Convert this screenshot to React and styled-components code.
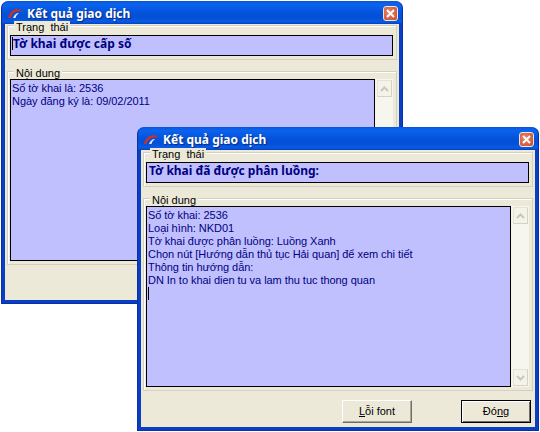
import React from 'react';
import styled, { createGlobalStyle } from 'styled-components';

const Global = createGlobalStyle`
    html, body {
        margin: 0;
        padding: 0;
        background: #fff;
    }
    #root {
        position: relative;
        width: 540px;
        height: 432px;
        overflow: hidden;
    }
`;

const AppLogo = () => (
    <svg width="17" height="13" viewBox="0 0 17 13">
        <path d="M1 11 C2 6 6 2 10 2 C12 2 14 3 15 5 C12 3.5 9 4 7 6 C5 7.5 4 9 3.5 11 Z" fill="#c8302a" />
        <path d="M6 11 C7 8 9 6 12 6 C10 7.5 9 9 8.5 11 Z" fill="#e8e8f4" />
    </svg>
);

const CloseIcon = () => (
    <svg width="9" height="9" viewBox="0 0 9 9">
        <path d="M1 1 L8 8 M8 1 L1 8" stroke="#fff" strokeWidth="2" />
    </svg>
);

const ArrowIcon = ({ down }) => (
    <svg width="9" height="6" viewBox="0 0 9 6">
        <path d={down ? 'M1 1 L4.5 4.5 L8 1' : 'M1 5 L4.5 1.5 L8 5'} fill="none" stroke="#c9c7ba" strokeWidth="2" />
    </svg>
);

const Dialog = ({ x, y, w, h, status, statusTop, bodyGap, lines, bodyHeight, footer }) => (
    <Window $x={x} $y={y} $w={w} $h={h}>
        <TitleBar>
            <AppLogo />
            <Title>Kết quả giao dịch</Title>
            <CloseButton><CloseIcon /></CloseButton>
        </TitleBar>
        <Client>
            <Group $top={statusTop}>
                <Legend>Trạng&nbsp; thái</Legend>
                <StatusField $focused={!footer}>
                    {!footer && <StatusCaret />}
                    {status}
                </StatusField>
            </Group>
            <BodyGroup $top={bodyGap}>
                <Legend>Nội dung</Legend>
                <BodyRow>
                    <BodyField $height={bodyHeight}>
                        {lines.map((line) => <Line key={line}>{line}</Line>)}
                        {footer && <Caret />}
                    </BodyField>
                    <ScrollBar>
                        <ScrollButton><ArrowIcon /></ScrollButton>
                        {footer && <ScrollButton><ArrowIcon down /></ScrollButton>}
                    </ScrollBar>
                </BodyRow>
            </BodyGroup>
            {footer && (
                <Footer>
                    <PushButton><u>L</u>ỗi font</PushButton>
                    <DefaultButton>Đó<u>n</u>g</DefaultButton>
                </Footer>
            )}
        </Client>
    </Window>
);

const App = () => (
    <>
        <Global />
        <Dialog
            x={1}
            y={1}
            w={402}
            h={303}
            statusTop={1}
            bodyGap={11}
            bodyHeight={182}
            status="Tờ khai được cấp số"
            lines={['Số tờ khai là: 2536', 'Ngày đăng ký là: 09/02/2011']}
        />
        <Dialog
            x={137}
            y={127}
            w={402}
            h={304}
            statusTop={2}
            bodyGap={11}
            bodyHeight={181}
            footer
            status="Tờ khai đã được phân luồng:"
            lines={[
                'Số tờ khai: 2536',
                'Loại hình: NKD01',
                'Tờ khai được phân luồng: Luồng Xanh',
                'Chọn nút [Hướng dẫn thủ tục Hải quan] để xem chi tiết',
                'Thông tin hướng dẫn:',
                'DN In to khai dien tu va lam thu tuc thong quan',
            ]}
        />
    </>
);

const Window = styled.div`
    position: absolute;
    left: ${(p) => p.$x}px;
    top: ${(p) => p.$y}px;
    width: ${(p) => p.$w}px;
    height: ${(p) => p.$h}px;
    box-sizing: border-box;
    display: flex;
    flex-direction: column;
    background: #0a3fc4;
    border-radius: 7px 7px 0 0;
    border: 1px solid #0831a8;
    border-top-color: #0a55d8;
    font-family: "Liberation Sans", Arial, sans-serif;
`;
const TitleBar = styled.div`
    height: 22px;
    flex: none;
    display: flex;
    align-items: center;
    gap: 3px;
    padding: 0 4px 0 5px;
    border-radius: 6px 6px 0 0;
    background: linear-gradient(180deg, #0a5ce0 0%, #0a63ee 12%, #0553dc 45%, #0450d6 70%, #0a5ae6 90%, #0441b8 100%);
`;
const Title = styled.span`
    flex: 1;
    color: #fff;
    font-family: "Noto Sans", Verdana, sans-serif;
    font-size: 12px;
    font-weight: bold;
    text-shadow: 1px 1px 1px #0a2a80;
`;
const CloseButton = styled.div`
    width: 13px;
    height: 13px;
    display: flex;
    align-items: center;
    justify-content: center;
    background: radial-gradient(circle at 40% 40%, #e8876a, #c8492a);
    border: 1px solid #f0e6e0;
    border-radius: 3px;
`;
const Client = styled.div`
    flex: 1;
    min-height: 0;
    margin: 0 3px 3px;
    display: flex;
    flex-direction: column;
    background: #ece9d8;
    padding: 0 2px;
`;
const Group = styled.div`
    position: relative;
    flex: none;
    margin-top: ${(p) => p.$top}px;
    padding: 9px 3px 3px 2px;
    border: 1px solid #d4d0bf;
    box-shadow: inset 1px 1px 0 #fff;
`;
const BodyGroup = styled(Group)`
    padding-top: 7px;
`;
const Legend = styled.span`
    position: absolute;
    top: -5px;
    left: 6px;
    padding: 0 2px;
    background: #ece9d8;
    color: #000;
    font-size: 11px;
    line-height: 12px;
`;
const StatusField = styled.div`
    height: 21px;
    box-sizing: border-box;
    border: 1px solid #000;
    background: #c0c0ff;
    padding: 0 2px 0 ${(p) => (p.$focused ? 1 : 2)}px;
    color: #000080;
    font-family: "Noto Sans", Verdana, sans-serif;
    font-size: 12px;
    font-weight: bold;
    line-height: 15px;
`;
const StatusCaret = styled.span`
    display: inline-block;
    width: 1px;
    height: 13px;
    vertical-align: -2px;
    background: #000;
`;
const BodyRow = styled.div`
    display: flex;
    align-items: stretch;
`;
const BodyField = styled.div`
    flex: 1;
    height: ${(p) => p.$height}px;
    box-sizing: border-box;
    border: 1px solid #000;
    background: #c0c0ff;
    padding: 2px 1px 1px 1px;
    color: #000080;
    font-size: 11px;
    letter-spacing: -0.05px;
`;
const Line = styled.div`
    line-height: 13px;
    white-space: nowrap;
`;
const Caret = styled.div`
    width: 1px;
    height: 13px;
    background: #000;
`;
const ScrollBar = styled.div`
    width: 18px;
    flex: none;
    box-sizing: border-box;
    padding: 1px 1px 1px 2px;
    display: flex;
    flex-direction: column;
    justify-content: space-between;
    background: #f6f5ee;
`;
const ScrollButton = styled.div`
    height: 15px;
    display: flex;
    align-items: center;
    justify-content: center;
    background: #f4f3ea;
    border: 1px solid #e6e3d6;
    border-right-color: #d6d3c4;
    border-bottom-color: #d6d3c4;
`;
const Footer = styled.div`
    flex: 1;
    display: flex;
    justify-content: flex-end;
    align-items: center;
    gap: 49px;
    padding-right: 2px;
    padding-top: 4px;
`;
const PushButton = styled.div`
    width: 70px;
    height: 23px;
    box-sizing: border-box;
    display: flex;
    align-items: center;
    justify-content: center;
    background: #ece9d8;
    border: 1px solid;
    border-color: #fff #716f64 #716f64 #fff;
    box-shadow: inset -1px -1px 0 #aca899;
    color: #000;
    font-size: 11px;
    white-space: pre;
`;
const DefaultButton = styled(PushButton)`
    border: 1px solid #000;
    box-shadow: inset 1px 1px 0 #fff, inset -1px -1px 0 #716f64;
`;

export default App;
